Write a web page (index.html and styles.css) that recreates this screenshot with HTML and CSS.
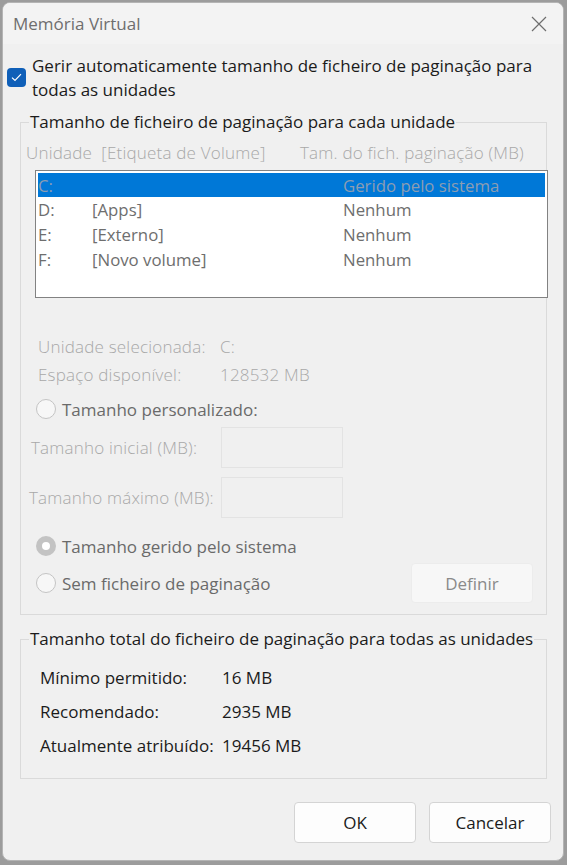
FILE: index.html
```html
<!DOCTYPE html>
<html lang="pt">
<head>
    <meta charset="UTF-8">
    <meta name="viewport" content="width=device-width, initial-scale=1.0">
    <title>Memória Virtual</title>
    <link rel="stylesheet" href="styles.css">
</head>
<body>
    <div class="dialog">
        <div class="titlebar">
            <span class="title">Memória Virtual</span>
            <svg class="close" width="16" height="16" viewBox="0 0 16 16">
                <path d="M1 1 L15 15 M15 1 L1 15" stroke="#6e6e6e" stroke-width="1.2" fill="none"/>
            </svg>
        </div>

        <div class="content">
            <label class="auto">
                <span class="checkbox">
                    <svg width="11" height="9" viewBox="0 0 11 9">
                        <path d="M1 4.6 L4 7.5 L10 1.2" stroke="#fff" stroke-width="1.2" fill="none"/>
                    </svg>
                </span>
                <span>Gerir automaticamente tamanho de ficheiro de paginação para todas as unidades</span>
            </label>

            <fieldset class="group drives">
                <legend>Tamanho de ficheiro de paginação para cada unidade</legend>
                <div class="list-head">
                    <span>Unidade&nbsp;&nbsp;[Etiqueta de Volume]</span>
                    <span>Tam. do fich. paginação (MB)</span>
                </div>
                <div class="list">
                    <div class="row selected"><span>C:</span><span></span><span>Gerido pelo sistema</span></div>
                    <div class="row"><span>D:</span><span>[Apps]</span><span>Nenhum</span></div>
                    <div class="row"><span>E:</span><span>[Externo]</span><span>Nenhum</span></div>
                    <div class="row"><span>F:</span><span>[Novo volume]</span><span>Nenhum</span></div>
                </div>

                <div class="info">
                    <span>Unidade selecionada:</span><span>C:</span>
                    <span>Espaço disponível:</span><span>128532 MB</span>
                </div>

                <div class="radio-row first">
                    <span class="radio"></span>
                    <span>Tamanho personalizado:</span>
                </div>

                <div class="sizes">
                    <span class="size-label">Tamanho inicial (MB):</span>
                    <span class="field"></span>
                    <span class="size-label max">Tamanho máximo (MB):</span>
                    <span class="field"></span>
                </div>

                <div class="radio-row system">
                    <span class="radio checked"></span>
                    <span>Tamanho gerido pelo sistema</span>
                </div>
                <div class="radio-row none">
                    <span class="radio"></span>
                    <span>Sem ficheiro de paginação</span>
                    <button class="btn set" disabled>Definir</button>
                </div>
            </fieldset>

            <fieldset class="group totals">
                <legend>Tamanho total do ficheiro de paginação para todas as unidades</legend>
                <div class="total-grid">
                    <span>Mínimo permitido:</span><span>16 MB</span>
                    <span>Recomendado:</span><span>2935 MB</span>
                    <span>Atualmente atribuído:</span><span>19456 MB</span>
                </div>
            </fieldset>

            <div class="actions">
                <button class="btn">OK</button>
                <button class="btn">Cancelar</button>
            </div>
        </div>
    </div>
</body>
</html>
```

FILE: styles.css
```css
* {
    box-sizing: border-box;
}
body {
    margin: 0;
    padding: 2px 0 0 2px;
    background: #9c9c9c;
    font-family: 'Open Sans', 'Noto Sans', sans-serif;
    font-size: 17px;
    color: #1b1b1b;
}
.dialog {
    width: 562px;
    height: 859px;
    background: #f0f0f0;
    border: 1px solid #b4b4b4;
    border-radius: 8px;
    overflow: hidden;
}
.titlebar {
    height: 41px;
    background: #f3f3f3;
    display: flex;
    align-items: center;
    justify-content: space-between;
    padding: 0 16px 0 10px;
}
.title {
    font-size: 17px;
    color: #6e6e6e;
}
.content {
    padding: 10px 0 0 4px;
}
/* Checkbox row */
.auto {
    display: flex;
    align-items: center;
    gap: 6px;
    line-height: 24px;
    padding-right: 20px;
}
.checkbox {
    flex: none;
    width: 19px;
    height: 19px;
    margin-top: -2px;
    background: #0f5fb8;
    border-radius: 4px;
    display: flex;
    align-items: center;
    justify-content: center;
}
/* Group boxes */
.group {
    margin: 8px 0 0 13px;
    width: 527px;
    border: 1px solid #dadada;
    padding: 8px 0 11px 0;
    min-width: 0;
}
.group legend {
    line-height: 24px;
    padding: 0 1px;
    margin-left: 8px;
    color: #1b1b1b;
}
/* Disabled texts use a lighter, wider face */
.list-head,
.info,
.sizes {
    color: #a8a8a8;
    font-weight: 300;
    font-size: 17px;
    letter-spacing: 0.2px;
}
.list-head {
    display: flex;
    padding-left: 5px;
    line-height: 22px;
}
.list-head span:first-child {
    width: 274px;
}
.list {
    margin: 6px 0 0 14px;
    width: 513px;
    height: 128px;
    background: #fff;
    border: 1px solid #828282;
    padding: 2px;
}
.row {
    display: grid;
    grid-template-columns: 54px 251px 1fr;
    height: 25px;
    line-height: 25px;
    font-size: 16.8px;
    color: #6e6e6e;
}
.row.selected {
    background: #0078d7;
    color: #8c9db2;
    height: 24px;
}
.info {
    display: grid;
    grid-template-columns: 182px 1fr;
    margin: 35px 0 0 17px;
    line-height: 28px;
}
/* Radio buttons */
.radio-row {
    display: flex;
    align-items: center;
    gap: 6px;
    margin-left: 15px;
    color: #6a6a6a;
}
.radio-row.first {
    height: 28px;
    margin-top: 6px;
}
.radio-row.system {
    height: 28px;
    margin-top: 14px;
}
.radio-row.none {
    height: 40px;
    margin-top: 3px;
}
.radio {
    flex: none;
    width: 20px;
    height: 20px;
    border-radius: 50%;
    border: 1px solid #c4c4c4;
    background: #f7f7f7;
}
.radio.checked {
    border: 6px solid #c3c3c3;
    background: #fff;
}
.sizes {
    display: grid;
    grid-template-columns: 190px 122px;
    grid-template-rows: 41px 41px;
    row-gap: 9px;
    align-items: center;
    margin: 4px 0 0 10px;
}
.size-label.max {
    margin-left: -2px;
}
.field {
    height: 41px;
    border: 1px solid #e3e3e3;
}
/* Buttons */
.btn {
    width: 122px;
    height: 41px;
    border: 1px solid #d4d4d4;
    border-radius: 4px;
    background: #fdfdfd;
    font-family: inherit;
    font-size: 17px;
    color: #1b1b1b;
}
.btn.set {
    margin-left: auto;
    margin-right: 13px;
    height: 40px;
    background: #f7f7f7;
    border-color: #ececec;
    color: #8a8a8a;
}
.totals {
    margin-top: 12px;
    padding: 10px 0 15px 0;
}
.total-grid {
    display: grid;
    grid-template-columns: 182px 1fr;
    margin-left: 19px;
    line-height: 34px;
}
.actions {
    display: flex;
    justify-content: flex-end;
    gap: 13px;
    margin: 23px 12px 0 0;
}
```
